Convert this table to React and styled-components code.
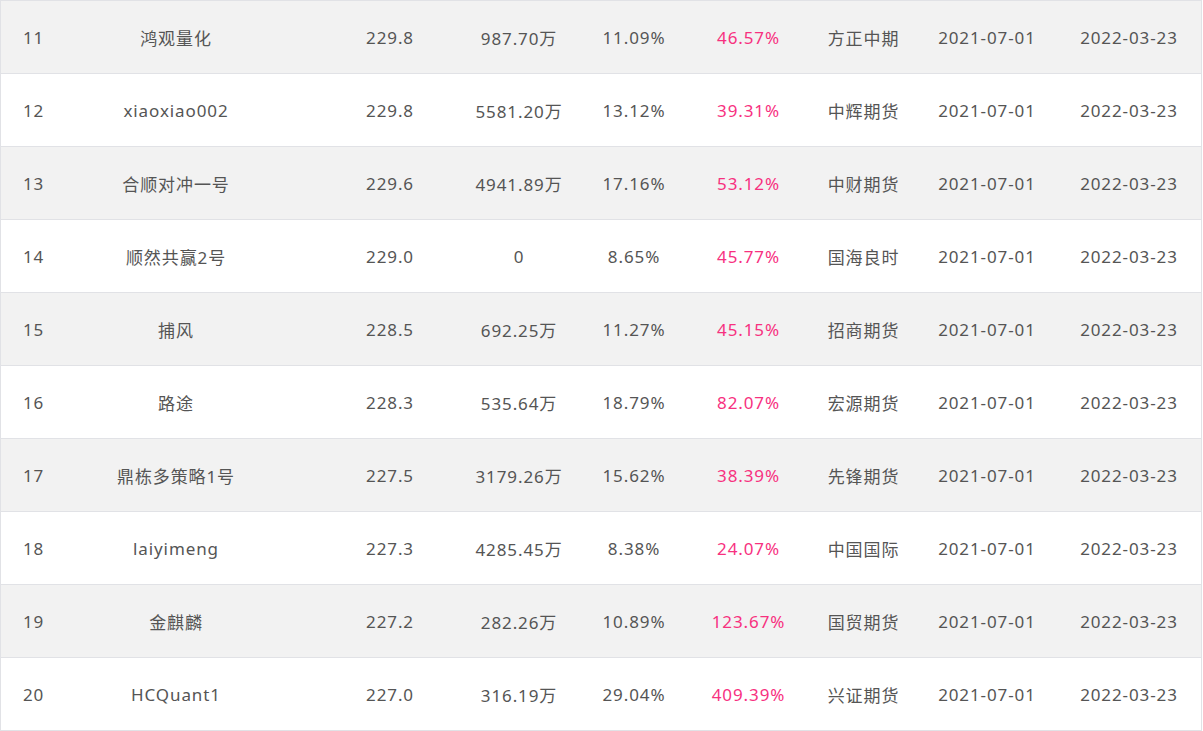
import React from "react";
import styled, { createGlobalStyle } from "styled-components";

const Global = createGlobalStyle`
  html, body { margin: 0; padding: 0; background: #ffffff; }
  body { font-family: "Noto Sans", "Noto Sans CJK SC", sans-serif; }
`;

const COLS = [65, 220, 208, 50, 180, 49, 181, 66, 218];

const rows = [
  ["11", "鸿观量化", "229.8", "987.70万", "11.09%", "46.57%", "方正中期", "2021-07-01", "2022-03-23"],
  ["12", "xiaoxiao002", "229.8", "5581.20万", "13.12%", "39.31%", "中辉期货", "2021-07-01", "2022-03-23"],
  ["13", "合顺对冲一号", "229.6", "4941.89万", "17.16%", "53.12%", "中财期货", "2021-07-01", "2022-03-23"],
  ["14", "顺然共赢2号", "229.0", "0", "8.65%", "45.77%", "国海良时", "2021-07-01", "2022-03-23"],
  ["15", "捕风", "228.5", "692.25万", "11.27%", "45.15%", "招商期货", "2021-07-01", "2022-03-23"],
  ["16", "路途", "228.3", "535.64万", "18.79%", "82.07%", "宏源期货", "2021-07-01", "2022-03-23"],
  ["17", "鼎栋多策略1号", "227.5", "3179.26万", "15.62%", "38.39%", "先锋期货", "2021-07-01", "2022-03-23"],
  ["18", "laiyimeng", "227.3", "4285.45万", "8.38%", "24.07%", "中国国际", "2021-07-01", "2022-03-23"],
  ["19", "金麒麟", "227.2", "282.26万", "10.89%", "123.67%", "国贸期货", "2021-07-01", "2022-03-23"],
  ["20", "HCQuant1", "227.0", "316.19万", "29.04%", "409.39%", "兴证期货", "2021-07-01", "2022-03-23"],
];

const Table = styled.div`
  width: 1202px;
  box-sizing: border-box;
  border: 1px solid #e1e2e6;
  border-bottom: none;
  overflow: hidden;
`;

const Row = styled.div`
  display: grid;
  grid-template-columns: ${COLS.map((w) => `${w}px`).join(" ")};
  height: 72px;
  border-bottom: 1px solid #e1e2e6;
  background: ${(p) => (p.$striped ? "#f2f2f2" : "#ffffff")};
`;

const Cell = styled.div`
  display: flex;
  align-items: center;
  justify-content: center;
  white-space: nowrap;
  font-size: 17px;
  letter-spacing: 0.9px;
  color: ${(p) => (p.$accent ? "#f7317f" : "#555555")};
`;

export default function App() {
  return (
    <>
      <Global />
      <Table>
        {rows.map((r, i) => (
          <Row key={r[0]} $striped={i % 2 === 0}>
            {r.map((v, j) => (
              <Cell key={j} $accent={j === 5}>
                {v}
              </Cell>
            ))}
          </Row>
        ))}
      </Table>
    </>
  );
}
